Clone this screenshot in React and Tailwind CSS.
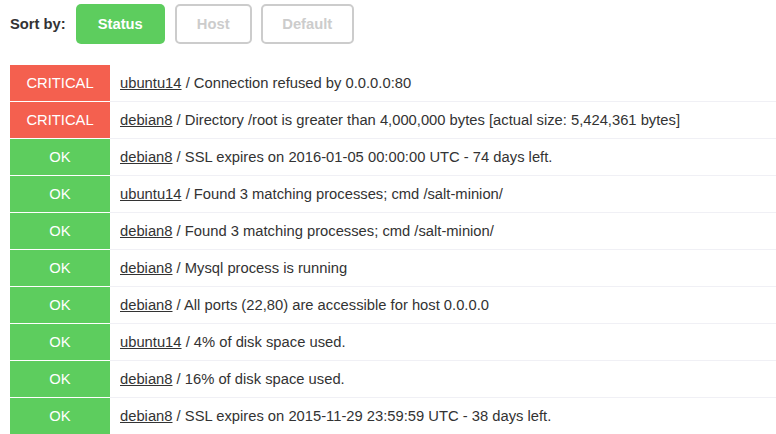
import React from "react";

const rows = [
  { status: "CRITICAL", host: "ubuntu14", msg: "Connection refused by 0.0.0.0:80" },
  { status: "CRITICAL", host: "debian8", msg: "Directory /root is greater than 4,000,000 bytes [actual size: 5,424,361 bytes]" },
  { status: "OK", host: "debian8", msg: "SSL expires on 2016-01-05 00:00:00 UTC - 74 days left." },
  { status: "OK", host: "ubuntu14", msg: "Found 3 matching processes; cmd /salt-minion/" },
  { status: "OK", host: "debian8", msg: "Found 3 matching processes; cmd /salt-minion/" },
  { status: "OK", host: "debian8", msg: "Mysql process is running" },
  { status: "OK", host: "debian8", msg: "All ports (22,80) are accessible for host 0.0.0.0" },
  { status: "OK", host: "ubuntu14", msg: "4% of disk space used." },
  { status: "OK", host: "debian8", msg: "16% of disk space used." },
  { status: "OK", host: "debian8", msg: "SSL expires on 2015-11-29 23:59:59 UTC - 38 days left." },
];

function App() {
  return (
    <div className="min-h-screen bg-white text-[#333] text-[14.75px] font-['Liberation_Sans',Arial,sans-serif]">
      {/* Sort bar */}
      <div className="flex items-center h-[48px] pl-[10px]">
        <span className="font-bold text-[#333] mr-[10px]">Sort by:</span>
        <button className="w-[89px] h-[40px] rounded-[5px] bg-[#5dcd5e] text-white font-bold mr-[10px]">
          Status
        </button>
        <button className="w-[77px] h-[40px] rounded-[5px] border-2 border-[#cccccc] text-[#cccccc] font-bold mr-[9px]">
          Host
        </button>
        <button className="w-[93px] h-[40px] rounded-[5px] border-2 border-[#cccccc] text-[#cccccc] font-bold">
          Default
        </button>
      </div>

      {/* Checks */}
      <div className="mt-[17px] ml-[10px]">
        {rows.map((r, i) => (
          <div key={i} className="flex h-[37px] border-b border-[#f0f0f5]">
            <div
              className={
                "w-[100px] shrink-0 flex items-center justify-center text-white border-b border-white -mb-px " +
                (r.status === "OK" ? "bg-[#5dcd5e]" : "bg-[#f4604f]")
              }
            >
              {r.status}
            </div>
            <div className="flex items-center pl-[10px]">
              <span className="underline">{r.host}</span>
              <span>&nbsp;/ {r.msg}</span>
            </div>
          </div>
        ))}
      </div>
    </div>
  );
}

export default App;
